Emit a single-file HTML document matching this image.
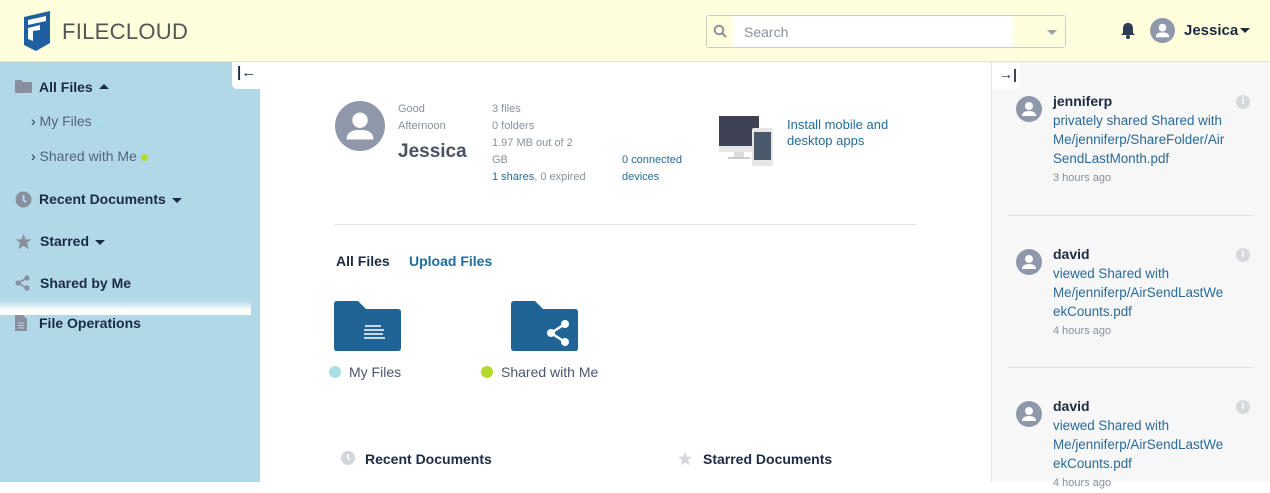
<!DOCTYPE html>
<html><head><meta charset="utf-8"><style>
*{margin:0;padding:0;box-sizing:border-box}
body{width:1270px;height:482px;overflow:hidden;font-family:"Liberation Sans",Arial,sans-serif;background:#fff;position:relative}
.hdr{position:absolute;left:0;top:0;width:1270px;height:62px;background:#fefddc;border-bottom:1px solid #e6e4c8}
.side{position:absolute;left:0;top:62px;width:260px;height:420px;background:#b1d8e6}
.right{position:absolute;left:991px;top:62px;width:279px;height:420px;background:#f7f7f7;border-left:1px solid #e4e4e4}
.abs{position:absolute}
.nav{position:absolute;left:39px;font-weight:bold;font-size:14px;color:#1d2a44}
.sub{position:absolute;left:31px;font-size:14px;color:#56637a}
.tri{display:inline-block;width:0;height:0;border-left:5px solid transparent;border-right:5px solid transparent;vertical-align:middle;margin-left:6px}
.small{font-size:11px;color:#8a909c;line-height:17px}
.link{color:#236d9c}
.act{position:absolute;left:1053px;font-size:13.4px;line-height:19px;color:#2a6a98;white-space:nowrap}
.act b{color:#1d2a44;font-size:14px}
.act .t{display:block;font-size:11px;color:#8a909c;margin-top:1px}
.av{position:absolute;width:26px;height:26px;border-radius:50%;background:#8f97aa}
.info{position:absolute;left:1236px;width:14px;height:14px;border-radius:50%;background:#d6d8dc;color:#fff;font-size:10px;text-align:center;line-height:14px;font-weight:bold}
</style></head><body>
<div class="hdr"></div>
<svg class="abs" style="left:22px;top:11px" width="30" height="40" viewBox="0 0 30 40"><path d="M2 6 L28 0 L28 32 L14 40 L2 34 Z" fill="#1f5f9f"/><path d="M6 9 L24 5 L24 10 L6 14Z M6 17 L18 14 L18 19 L11 20 L11 30 L6 28Z" fill="#fff"/></svg>
<div class="abs" style="left:62px;top:19px;font-size:22px;color:#555;letter-spacing:0.3px">FILECLOUD</div>
<div class="abs" style="left:706px;top:15px;width:360px;height:33px;border:1px solid #ccc;border-radius:3px;background:#fff"></div>
<div class="abs" style="left:707px;top:16px;width:26px;height:31px;background:#fefddc"></div>
<svg class="abs" style="left:713px;top:24px" width="14" height="14" viewBox="0 0 14 14"><circle cx="6" cy="6" r="4.3" stroke="#8d93a0" stroke-width="2" fill="none"/><path d="M9 9 L13 13" stroke="#8d93a0" stroke-width="2.2"/></svg>
<div class="abs" style="left:744px;top:24px;font-size:14px;color:#8a909c">Search</div>
<div class="abs" style="left:1013px;top:16px;width:52px;height:31px;background:#fefddc"></div>
<div class="abs" style="left:1047px;top:30px;border-left:5px solid transparent;border-right:5px solid transparent;border-top:5px solid #9aa0aa"></div>
<svg class="abs" style="left:1120px;top:22px" width="16" height="17" viewBox="0 0 16 17"><path d="M8 1 C4 1 3 4 3 7 L3 11 L1 13 L15 13 L13 11 L13 7 C13 4 12 1 8 1Z" fill="#2f3a55"/><circle cx="8" cy="15" r="2" fill="#2f3a55"/></svg>
<div class="av" style="left:1150px;top:18px;width:25px;height:25px"></div>
<svg class="abs" style="left:1150px;top:18px" width="25" height="25" viewBox="0 0 26 26"><circle cx="13" cy="10" r="4" fill="#fff"/><path d="M6 20 Q6 15 13 15 Q20 15 20 20Z" fill="#fff"/></svg>
<div class="abs" style="left:1184px;top:22px;font-size:15px;font-weight:bold;color:#1d2a44">Jessica</div>
<div class="abs" style="left:1240px;top:28px;border-left:5px solid transparent;border-right:5px solid transparent;border-top:5px solid #1d2a44"></div>

<div class="side"></div>
<div class="abs" style="left:232px;top:62px;width:28px;height:27px;background:#fff;border-radius:0 0 0 5px"></div>
<div class="abs" style="left:237px;top:64px;font-size:15px;font-weight:bold;color:#1d2a44">|←</div>
<svg class="abs" style="left:15px;top:80px" width="17" height="13" viewBox="0 0 17 13"><path d="M0 1 Q0 0 1 0 L6 0 L8 2 L16 2 Q17 2 17 3 L17 12 Q17 13 16 13 L1 13 Q0 13 0 12Z" fill="#8a8fa0"/></svg>
<div class="nav" style="top:79px">All Files<span class="tri" style="border-bottom:5px solid #1d2a44;margin-top:-3px"></span></div>
<div class="sub" style="top:113px"><span style="color:#1d2a44">›</span> My Files <span style="display:inline-block;width:7px;height:7px;border-radius:50%;background:#a9e0e4"></span></div>
<div class="sub" style="top:148px"><span style="color:#1d2a44">›</span> Shared with Me <span style="display:inline-block;width:7px;height:7px;border-radius:50%;background:#b5d92c"></span></div>
<svg class="abs" style="left:15px;top:191px" width="17" height="17"><circle cx="8.5" cy="8.5" r="8" fill="#8a8fa0"/><path d="M8.5 4 L8.5 9 L11 11" stroke="#b1d8e6" stroke-width="2" fill="none"/></svg>
<div class="nav" style="top:191px">Recent Documents<span class="tri" style="border-top:5px solid #1d2a44"></span></div>
<svg class="abs" style="left:15px;top:233px" width="17" height="17" viewBox="0 0 24 24"><path d="M12 1 L15 9 L23 9 L17 14 L19 23 L12 18 L5 23 L7 14 L1 9 L9 9Z" fill="#8a8fa0"/></svg>
<div class="nav" style="top:233px;left:40px">Starred<span class="tri" style="border-top:5px solid #1d2a44"></span></div>
<svg class="abs" style="left:15px;top:275px" width="15" height="16" viewBox="0 0 15 16"><circle cx="12" cy="3" r="2.6" fill="#8a8fa0"/><circle cx="3" cy="8" r="2.6" fill="#8a8fa0"/><circle cx="12" cy="13" r="2.6" fill="#8a8fa0"/><path d="M12 3 L3 8 L12 13" stroke="#8a8fa0" stroke-width="1.6" fill="none"/></svg>
<div class="nav" style="top:275px;left:40px">Shared by Me</div>
<div class="abs" style="left:0;top:300px;width:251px;height:15px;background:linear-gradient(#b1d8e6,#fff 70%)"></div>
<svg class="abs" style="left:15px;top:315px" width="12" height="16"><path d="M0 0 L8 0 L12 4 L12 16 L0 16Z" fill="#8a8fa0"/><path d="M3 8 H9 M3 10.5 H9 M3 13 H9" stroke="#b1d8e6"/></svg>
<div class="nav" style="top:315px">File Operations</div>

<div class="av" style="left:335px;top:101px;width:50px;height:50px"></div>
<svg class="abs" style="left:335px;top:101px" width="50" height="50" viewBox="0 0 26 26"><circle cx="13" cy="10" r="4" fill="#fff"/><path d="M6 20 Q6 15 13 15 Q20 15 20 20Z" fill="#fff"/></svg>
<div class="abs small" style="left:398px;top:101px">Good<br>Afternoon</div>
<div class="abs" style="left:398px;top:141px;font-size:19px;font-weight:bold;color:#4a5260">Jessica</div>
<div class="abs small" style="left:492px;top:101px">3 files<br>0 folders<br>1.97 MB out of 2<br>GB<br><span class="link">1 shares</span>, 0 expired</div>
<div class="abs small link" style="left:622px;top:152px">0 connected<br>devices</div>
<svg class="abs" style="left:719px;top:116px" width="56" height="50"><rect x="0" y="0" width="40" height="30" fill="#3e4154"/><rect x="0" y="30" width="40" height="6" fill="#e6e6e6"/><rect x="15" y="36" width="10" height="5" fill="#ddd"/><rect x="9" y="41" width="22" height="2" fill="#ccc"/><rect x="33" y="12" width="21" height="38" rx="2" fill="#e6e6e6"/><rect x="35" y="16" width="17" height="28" fill="#4a5a6c"/></svg>
<div class="abs link" style="left:787px;top:117px;font-size:13px;line-height:16px">Install mobile and<br>desktop apps</div>
<div class="abs" style="left:334px;top:224px;width:582px;height:1px;background:#e4e4e4"></div>
<div class="abs" style="left:336px;top:253px;font-size:14px;font-weight:bold;color:#1d2a44">All Files</div>
<div class="abs link" style="left:409px;top:253px;font-size:14px;font-weight:bold">Upload Files</div>
<svg class="abs" style="left:334px;top:301px" width="67" height="50"><path d="M0 3 Q0 0 3 0 L24 0 L32 8 L64 8 Q67 8 67 11 L67 47 Q67 50 64 50 L3 50 Q0 50 0 47Z" fill="#1f6494"/><path d="M31 25 H47 M30 29 H50 M30 33 H49 M30 37 H51" stroke="#fff" stroke-width="1.5"/></svg>
<svg class="abs" style="left:511px;top:301px" width="67" height="50"><path d="M0 3 Q0 0 3 0 L24 0 L32 8 L64 8 Q67 8 67 11 L67 47 Q67 50 64 50 L3 50 Q0 50 0 47Z" fill="#1f6494"/><circle cx="54" cy="23" r="4" fill="#fff"/><circle cx="40" cy="32" r="4" fill="#fff"/><circle cx="54" cy="41" r="4" fill="#fff"/><path d="M54 23 L40 32 L54 41" stroke="#fff" stroke-width="2.5" fill="none"/></svg>
<div class="abs" style="left:329px;top:366px;width:12px;height:12px;border-radius:50%;background:#a9e0e4"></div>
<div class="abs" style="left:349px;top:364px;font-size:14px;color:#4a5570">My Files</div>
<div class="abs" style="left:481px;top:366px;width:12px;height:12px;border-radius:50%;background:#b5d92c"></div>
<div class="abs" style="left:501px;top:364px;font-size:14px;color:#4a5570">Shared with Me</div>
<svg class="abs" style="left:341px;top:451px" width="14" height="14"><circle cx="7" cy="7" r="7" fill="#d3d6dc"/><path d="M7 3 L7 7.5 L9 9" stroke="#fff" stroke-width="1.6" fill="none"/></svg>
<div class="abs" style="left:365px;top:451px;font-size:14px;font-weight:bold;color:#1d2a44">Recent Documents</div>
<svg class="abs" style="left:677px;top:451px" width="16" height="15" viewBox="0 0 24 24"><path d="M12 1 L15 9 L23 9 L17 14 L19 23 L12 18 L5 23 L7 14 L1 9 L9 9Z" fill="#d3d6dc"/></svg>
<div class="abs" style="left:703px;top:451px;font-size:14px;font-weight:bold;color:#1d2a44">Starred Documents</div>

<div class="right"></div>
<div class="abs" style="left:992px;top:63px;width:28px;height:26px;background:#fff;border-radius:0 0 5px 0"></div>
<div class="abs" style="left:999px;top:66px;font-size:14px;font-weight:bold;color:#1d2a44">→|</div>
<div class="av" style="left:1016px;top:96px"></div><svg class="abs" style="left:1016px;top:96px" width="26" height="26"><circle cx="13" cy="10" r="4" fill="#fff"/><path d="M6 20 Q6 15 13 15 Q20 15 20 20Z" fill="#fff"/></svg>
<div class="act" style="top:92px"><b>jenniferp</b><br>privately shared Shared with<br>Me/jenniferp/ShareFolder/Air<br>SendLastMonth.pdf<span class="t">3 hours ago</span></div>
<div class="info" style="top:95px">i</div>
<div class="abs" style="left:1008px;top:215px;width:246px;height:1px;background:#e2e2e2"></div>
<div class="av" style="left:1016px;top:249px"></div><svg class="abs" style="left:1016px;top:249px" width="26" height="26"><circle cx="13" cy="10" r="4" fill="#fff"/><path d="M6 20 Q6 15 13 15 Q20 15 20 20Z" fill="#fff"/></svg>
<div class="act" style="top:245px"><b>david</b><br>viewed Shared with<br>Me/jenniferp/AirSendLastWe<br>ekCounts.pdf<span class="t">4 hours ago</span></div>
<div class="info" style="top:248px">i</div>
<div class="abs" style="left:1008px;top:367px;width:246px;height:1px;background:#e2e2e2"></div>
<div class="av" style="left:1016px;top:401px"></div><svg class="abs" style="left:1016px;top:401px" width="26" height="26"><circle cx="13" cy="10" r="4" fill="#fff"/><path d="M6 20 Q6 15 13 15 Q20 15 20 20Z" fill="#fff"/></svg>
<div class="act" style="top:397px"><b>david</b><br>viewed Shared with<br>Me/jenniferp/AirSendLastWe<br>ekCounts.pdf<span class="t">4 hours ago</span></div>
<div class="info" style="top:400px">i</div>
</body></html>
